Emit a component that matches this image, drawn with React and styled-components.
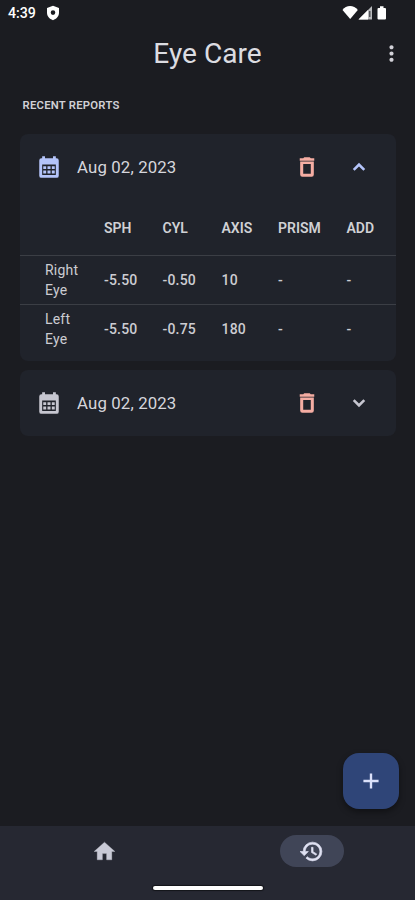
import React from "react";
import styled, { createGlobalStyle } from "styled-components";

const Global = createGlobalStyle`
  * { box-sizing: border-box; }
  body { margin: 0; background: #1b1c21; }
`;

const Screen = styled.div`
  position: relative;
  display: flex;
  flex-direction: column;
  width: 415px;
  height: 900px;
  overflow: hidden;
  background: #1b1c21;
  color: #dcdce1;
  font-family: Roboto, sans-serif;
`;

const StatusBar = styled.div`
  display: flex;
  align-items: center;
  height: 26px;
  padding: 0 27px 0 8px;
  color: #fff;
`;
const Clock = styled.span`
  width: 38px;
  font-size: 14.2px;
  line-height: 26px;
  font-weight: 500;
  letter-spacing: 0;
`;
const StatusIcons = styled.div`
  display: flex;
  margin-left: auto;
`;

const Header = styled.header`
  display: grid;
  grid-template-columns: 48px 1fr 48px;
  align-items: center;
  height: 56px;
`;
const Title = styled.h1`
  grid-column: 2;
  margin: 0;
  text-align: center;
  font-size: 28.1px;
  font-weight: 400;
  line-height: 36px;
`;
const MenuButton = styled.button`
  display: flex;
  justify-content: center;
  padding: 0 0 2px;
  border: 0;
  background: none;
  color: #d2d1d8;
`;

const Main = styled.main`
  flex: 1;
  padding: 16px 19px 0 20px;
`;
const SectionLabel = styled.h2`
  margin: 0 0 20px 2.5px;
  font-size: 11.3px;
  line-height: 16px;
  font-weight: 600;
  letter-spacing: 0.24px;
  color: #d0d0d5;
`;
const Reports = styled.div`
  display: flex;
  flex-direction: column;
  gap: 9px;
`;
const Card = styled.section`
  padding-bottom: ${(p) => (p.$open ? "7.5px" : "0")};
  border-radius: 8px;
  background: #20232b;
`;
const CardHeader = styled.div`
  display: grid;
  grid-template-columns: 57px 1fr 31px 74px;
  align-items: center;
  height: 66px;
`;
const IconCell = styled.span`
  display: flex;
  justify-content: center;
  color: ${(p) => p.$color};
`;
const DateText = styled.span`
  font-size: 16.8px;
  line-height: 24px;
  letter-spacing: 0.14px;
  color: #d6d6dc;
`;
const Row = styled.div`
  display: grid;
  grid-template-columns: 59px 58.5px 59px 56.5px 68.5px 1fr;
  align-items: center;
  height: ${(p) => (p.$head ? "56px" : p.$last ? "48.5px" : "49px")};
  padding-left: 25px;
  border-bottom: ${(p) => (p.$last ? "0" : "1px solid #3b3e45")};
`;
const HeadCell = styled.span`
  font-size: 14px;
  line-height: 20px;
  font-weight: 600;
  letter-spacing: 0;
  color: #d0d1d5;
`;
const Cell = styled.span`
  font-size: 14px;
  line-height: 20px;
  font-weight: ${(p) => (p.$label ? 400 : 500)};
  letter-spacing: 0.2px;
  color: #ccccd2;
`;

const Fab = styled.button`
  position: absolute;
  right: 16px;
  bottom: 91px;
  display: flex;
  align-items: center;
  justify-content: center;
  width: 56px;
  height: 56px;
  padding: 0;
  border: 0;
  border-radius: 16px;
  background: #2f4578;
  color: #dbe1fa;
  box-shadow: 0 3px 6px rgba(0, 0, 0, 0.4);
`;

const Nav = styled.nav`
  display: flex;
  flex-direction: column;
  align-items: center;
  height: 74px;
  background: #262832;
`;
const Tabs = styled.div`
  display: grid;
  grid-template-columns: 1fr 1fr;
  width: 100%;
  height: 50px;
  padding-left: 1px;
`;
const Tab = styled.div`
  display: flex;
  align-items: center;
  justify-content: center;
`;
const Pill = styled.span`
  display: flex;
  align-items: center;
  justify-content: center;
  width: 64px;
  height: 32px;
  border-radius: 16px;
  background: ${(p) => (p.$active ? "#404557" : "transparent")};
  color: ${(p) => (p.$active ? "#dfe1f2" : "#c9cad6")};
`;
const HomeIndicator = styled.div`
  width: 110px;
  height: 4px;
  margin-top: 10px;
  border-radius: 2px;
  background: #fff;
  box-shadow: 0 0 1px 1px rgba(0, 0, 0, 0.5);
`;

const paths = {
  calendar:
    "M19 4h-.7V2h-2.600v2H8.300V2H5.700v2H5a2 2 0 0 0-2 2v14a2 2 0 0 0 2 2h14a2 2 0 0 0 2-2V6a2 2 0 0 0-2-2zm-.7 15.300H5.700V9.600h12.600v9.700zM9.400 13.900H6.700v-2.600h2.700v2.600zm4 0h-2.800v-2.600h2.800v2.600zm3.900 0h-2.700v-2.600h2.700v2.600zM9.400 17.900H6.700v-2.700h2.700v2.700zm4 0h-2.800v-2.700h2.800v2.700zm3.900 0h-2.700v-2.700h2.700v2.700z",
  trash:
    "M5.700 6.900V19a2 2 0 0 0 2 2h8.600a2 2 0 0 0 2-2V6.900zM8.500 9.300h7v9h-7v-9zM15.500 4l-1-1h-5l-1 1H5.300v2.200h13.400V4z",
  up: "m12 7.800-6.200 6.200 1.800 1.800L12 11.400l4.400 4.400 1.800-1.800z",
  down: "M16.400 8.200 12 12.600 7.600 8.200 5.800 10l6.200 6.200 6.200-6.200z",
  plus: "M19 13.100h-5.900V19h-2.200v-5.900H5v-2.200h5.900V5h2.200v5.900H19z",
  home: "M10 20v-6h4v6h5v-8h3L12 3 2 12h3v8z",
  history:
    "M13 3a9 9 0 0 0-9 9H1l3.890 3.890.07.14L9 12H6c0-3.870 3.130-7 7-7s7 3.130 7 7-3.130 7-7 7c-1.930 0-3.680-.79-4.940-2.060l-1.420 1.420A8.954 8.954 0 0 0 13 21a9 9 0 0 0 0-18zm-1 5v5l4.280 2.540.72-1.210-3.500-2.080V8H12z",
  more: "M12 8c1.100 0 2-.9 2-2s-.9-2-2-2-2 .9-2 2 .9 2 2 2zm0 2c-1.100 0-2 .9-2 2s.9 2 2 2 2-.9 2-2-.9-2-2-2zm0 6c-1.100 0-2 .9-2 2s.9 2 2 2 2-.9 2-2-.9-2-2-2z",
};

const strokes = { history: 0.6, home: 0.3 };

function Icon({ name, size = 25 }) {
  return (
    <svg width={size} height={size} viewBox="0 0 24 24" fill="currentColor" aria-hidden="true">
      <path
        d={paths[name]}
        fillRule={name === "trash" ? "evenodd" : "nonzero"}
        stroke="currentColor"
        strokeWidth={strokes[name] || 0}
      />
    </svg>
  );
}

const columns = ["", "SPH", "CYL", "AXIS", "PRISM", "ADD"];
const reports = [
  {
    date: "Aug 02, 2023",
    rows: [
      ["Right Eye", "-5.50", "-0.50", "10", "-", "-"],
      ["Left Eye", "-5.50", "-0.75", "180", "-", "-"],
    ],
  },
  { date: "Aug 02, 2023" },
];

function EyeLabel({ text }) {
  const [side, eye] = text.split(" ");
  return (
    <Cell $label>
      {side}
      <br />
      {eye}
    </Cell>
  );
}

function Report({ date, rows }) {
  const open = Boolean(rows);
  return (
    <Card $open={open}>
      <CardHeader>
        <IconCell $color={open ? "#b4c4fa" : "#c6c6d0"}>
          <Icon name="calendar" size={26} />
        </IconCell>
        <DateText>{date}</DateText>
        <IconCell $color="#f5ada3">
          <Icon name="trash" size={26} />
        </IconCell>
        <IconCell $color={open ? "#b4c4fa" : "#c6c6d0"}>
          <Icon name={open ? "up" : "down"} size={24} />
        </IconCell>
      </CardHeader>
      {open && (
        <Row $head>
          {columns.map((c) => (
            <HeadCell key={c}>{c}</HeadCell>
          ))}
        </Row>
      )}
      {open &&
        rows.map(([label, ...values], i) => (
          <Row key={label} $last={i === rows.length - 1}>
            <EyeLabel text={label} />
            {values.map((v, j) => (
              <Cell key={j}>{v}</Cell>
            ))}
          </Row>
        ))}
    </Card>
  );
}

export default function App() {
  return (
    <Screen>
      <Global />
      <StatusBar>
        <Clock>4:39</Clock>
        <svg width="14" height="16" viewBox="0 0 14 16" aria-hidden="true">
          <path
            fill="#fff"
            fillRule="evenodd"
            d="M7 .8 13 3v4.800c0 3.600-2.400 6-6 7.400-3.600-1.400-6-3.800-6-7.400V3zM7 5.300a2.300 2.300 0 1 0 0 4.600 2.300 2.300 0 0 0 0-4.600z"
          />
        </svg>
        <StatusIcons>
          <svg width="46" height="16" viewBox="0 0 46 16" aria-hidden="true">
            <path fill="#fff" d="M.5 5C4-.2 12-.2 15.800 5L8.200 14z" />
            <path fill="#b9babd" d="M16.500 14.500 30 1v13.500z" />
            <path fill="#fff" d="M16.500 14.500 26 5v9.500z" />
            <path fill="#55565b" d="M27 6h1.500v6H27z" />
            <path fill="#fff" d="M38 1.300h3.500V3H43q1 0 1 1v9.500q0 1-1 1h-6.500q-1 0-1-1V4q0-1 1-1H38z" />
          </svg>
        </StatusIcons>
      </StatusBar>
      <Header>
        <Title>Eye Care</Title>
        <MenuButton aria-label="More options">
          <Icon name="more" />
        </MenuButton>
      </Header>
      <Main>
        <SectionLabel>RECENT REPORTS</SectionLabel>
        <Reports>
          {reports.map((r, i) => (
            <Report key={i} {...r} />
          ))}
        </Reports>
      </Main>
      <Fab aria-label="Add report">
        <Icon name="plus" size={26} />
      </Fab>
      <Nav>
        <Tabs>
          <Tab>
            <Pill>
              <Icon name="home" />
            </Pill>
          </Tab>
          <Tab>
            <Pill $active>
              <Icon name="history" />
            </Pill>
          </Tab>
        </Tabs>
        <HomeIndicator />
      </Nav>
    </Screen>
  );
}
